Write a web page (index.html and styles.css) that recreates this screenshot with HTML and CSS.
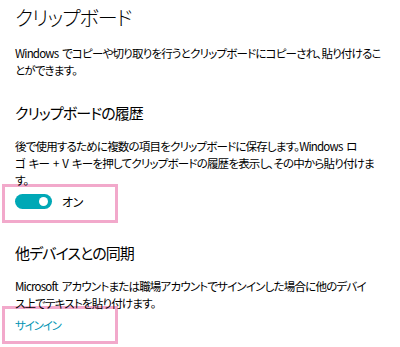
FILE: index.html
```html
<!DOCTYPE html>
<html lang="ja">

<head>
    <meta charset="UTF-8">
    <title>クリップボード</title>
    <link rel="stylesheet" href="styles.css">
</head>

<body>
    <div class="page">
        <h1>クリップボード</h1>
        <p class="desc intro">Windows でコピーや切り取りを行うとクリップボードにコピーされ、貼り付けるこ<br>とができます。</p>

        <h2 class="first">クリップボードの履歴</h2>
        <p class="desc">後で使用するために複数の項目をクリップボードに保存します。Windows ロ<br>ゴ キー + V キーを押してクリップボードの履歴を表示し、その中から貼り付けま<br>す。</p>
        <div class="mark toggle-row">
            <span class="toggle"><span class="knob"></span></span>
            <span class="toggle-label">オン</span>
        </div>

        <h2>他デバイスとの同期</h2>
        <p class="desc">Microsoft アカウントまたは職場アカウントでサインインした場合に他のデバイ<br>ス上でテキストを貼り付けます。</p>
        <div class="mark link-row">
            <a href="#" class="link">サインイン</a>
        </div>
    </div>
</body>

</html>
```

FILE: styles.css
```css
body {
    margin: 0;
    background-color: #fff;
    color: #000;
    font-family: "Noto Sans CJK JP", "Noto Sans", sans-serif;
    font-feature-settings: "palt";
}

.page {
    padding: 0 0 0 15px;
}

h1 {
    margin: 0;
    font-size: 20px;
    font-weight: 300;
    letter-spacing: -1px;
    line-height: 36px;
}

h2 {
    margin: 19px 0 0;
    font-size: 15px;
    font-weight: 400;
    letter-spacing: -0.9px;
    line-height: 22px;
}

h2.first {
    margin-top: 23px;
}

.desc {
    margin: 14px 0 0;
    font-size: 11.5px;
    letter-spacing: -0.8px;
    word-spacing: 2px;
    line-height: 17px;
    white-space: nowrap;
}

.desc.intro {
    margin-top: 9px;
}

.mark {
    margin-left: -13px;
    width: 100px;
    border: 3px solid #f2a9cb;
    padding: 0 0 0 10px;
    display: flex;
    align-items: center;
}

.toggle-row {
    margin-top: -5px;
    gap: 10px;
    padding-bottom: 4px;
    box-sizing: content-box;
    height: 29px;
}

.toggle {
    width: 37px;
    height: 15px;
    border-radius: 8px;
    background-color: #00a8b6;
    position: relative;
}

.knob {
    position: absolute;
    right: 4px;
    top: 3px;
    width: 9px;
    height: 9px;
    border-radius: 50%;
    background-color: #fff;
}

.toggle-label {
    font-size: 12px;
    letter-spacing: -0.5px;
}

.link-row {
    margin-top: -6px;
    height: 32px;
}

.link {
    color: #0094b4;
    font-size: 11.5px;
    letter-spacing: -1.2px;
    text-decoration: none;
}
```
